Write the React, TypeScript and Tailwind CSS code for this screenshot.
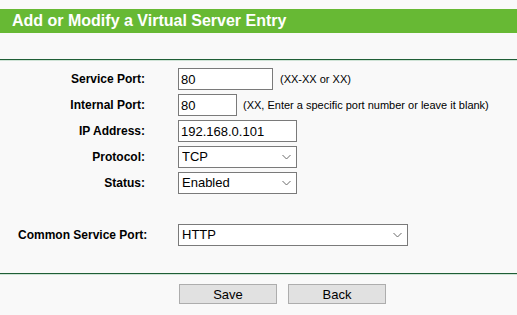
import React from "react";

const labelCls = "text-[12px] font-bold text-black text-right";
const inputCls =
  "block h-[22px] border border-[#7a7a7a] bg-white px-[2px] text-[13px] text-black outline-none";

const Chevron: React.FC = () => (
  <svg
    className="pointer-events-none absolute right-[6px] top-1/2 -translate-y-1/2"
    width="9"
    height="5"
    viewBox="0 0 9 5"
  >
    <path d="M0.5 0.5 L4.5 4.5 L8.5 0.5" fill="none" stroke="#6b6b6b" strokeWidth="1" />
  </svg>
);

const Select: React.FC<{ value: string; options: string[]; width: string }> = ({ value, options, width }) => (
  <div className={`relative ${width}`}>
    <select
      defaultValue={value}
      className="block h-[22px] w-full appearance-none border border-[#7a7a7a] bg-white pl-[3px] text-[13px] text-black outline-none"
    >
      {options.map((o) => (
        <option key={o}>{o}</option>
      ))}
    </select>
    <Chevron />
  </div>
);

const App: React.FC = () => {
  return (
    <div
      className="h-[315px] w-[517px] overflow-hidden bg-[#f9f9f9]"
      style={{ fontFamily: '"Liberation Sans", Arial, sans-serif' }}
    >
      <div className="pt-[9px]">
        <div className="flex h-[24px] items-center bg-[#67b934] pl-[12px] text-[16px] font-bold text-white">
          Add or Modify a Virtual Server Entry
        </div>
      </div>
      <div className="mt-[26px] h-[1px] bg-[#1f5e36]" />
      <div className="h-[1px] bg-[#cfe3d6]" />

      <div className="mt-[7px] grid grid-cols-[145px_1fr] items-center gap-x-[33px] gap-y-[4px]">
        <div className={labelCls}>Service Port:</div>
        <div className="flex items-center gap-[7px]">
          <input defaultValue="80" className={`${inputCls} w-[95px]`} />
          <span className="text-[11px] text-black">(XX-XX or XX)</span>
        </div>

        <div className={labelCls}>Internal Port:</div>
        <div className="flex items-center gap-[6px]">
          <input defaultValue="80" className={`${inputCls} w-[59px]`} />
          <span className="whitespace-nowrap text-[11px] text-black">
            (XX, Enter a specific port number or leave it blank)
          </span>
        </div>

        <div className={labelCls}>IP Address:</div>
        <div>
          <input defaultValue="192.168.0.101" className={`${inputCls} w-[119px]`} />
        </div>

        <div className={labelCls}>Protocol:</div>
        <Select value="TCP" options={["TCP", "UDP", "ALL"]} width="w-[119px]" />

        <div className={labelCls}>Status:</div>
        <Select value="Enabled" options={["Enabled", "Disabled"]} width="w-[119px]" />
      </div>

      <div className="mt-[30px] grid grid-cols-[178px_1fr] items-center">
        <div className="pl-[18px] text-[12px] font-bold text-black">Common Service Port:</div>
        <Select value="HTTP" options={["HTTP", "FTP", "TELNET", "SMTP", "DNS"]} width="w-[230px]" />
      </div>

      <div className="mt-[27px] h-[1px] bg-[#1f5e36]" />
      <div className="h-[1px] bg-[#cfe3d6]" />

      <div className="mt-[9px] flex gap-[11px] pl-[179px]">
        <button className="h-[20px] w-[98px] border border-[#adadad] bg-[#e1e1e1] text-[13px] leading-none text-black">
          Save
        </button>
        <button className="h-[20px] w-[98px] border border-[#adadad] bg-[#e1e1e1] text-[13px] leading-none text-black">
          Back
        </button>
      </div>
    </div>
  );
};

export default App;
